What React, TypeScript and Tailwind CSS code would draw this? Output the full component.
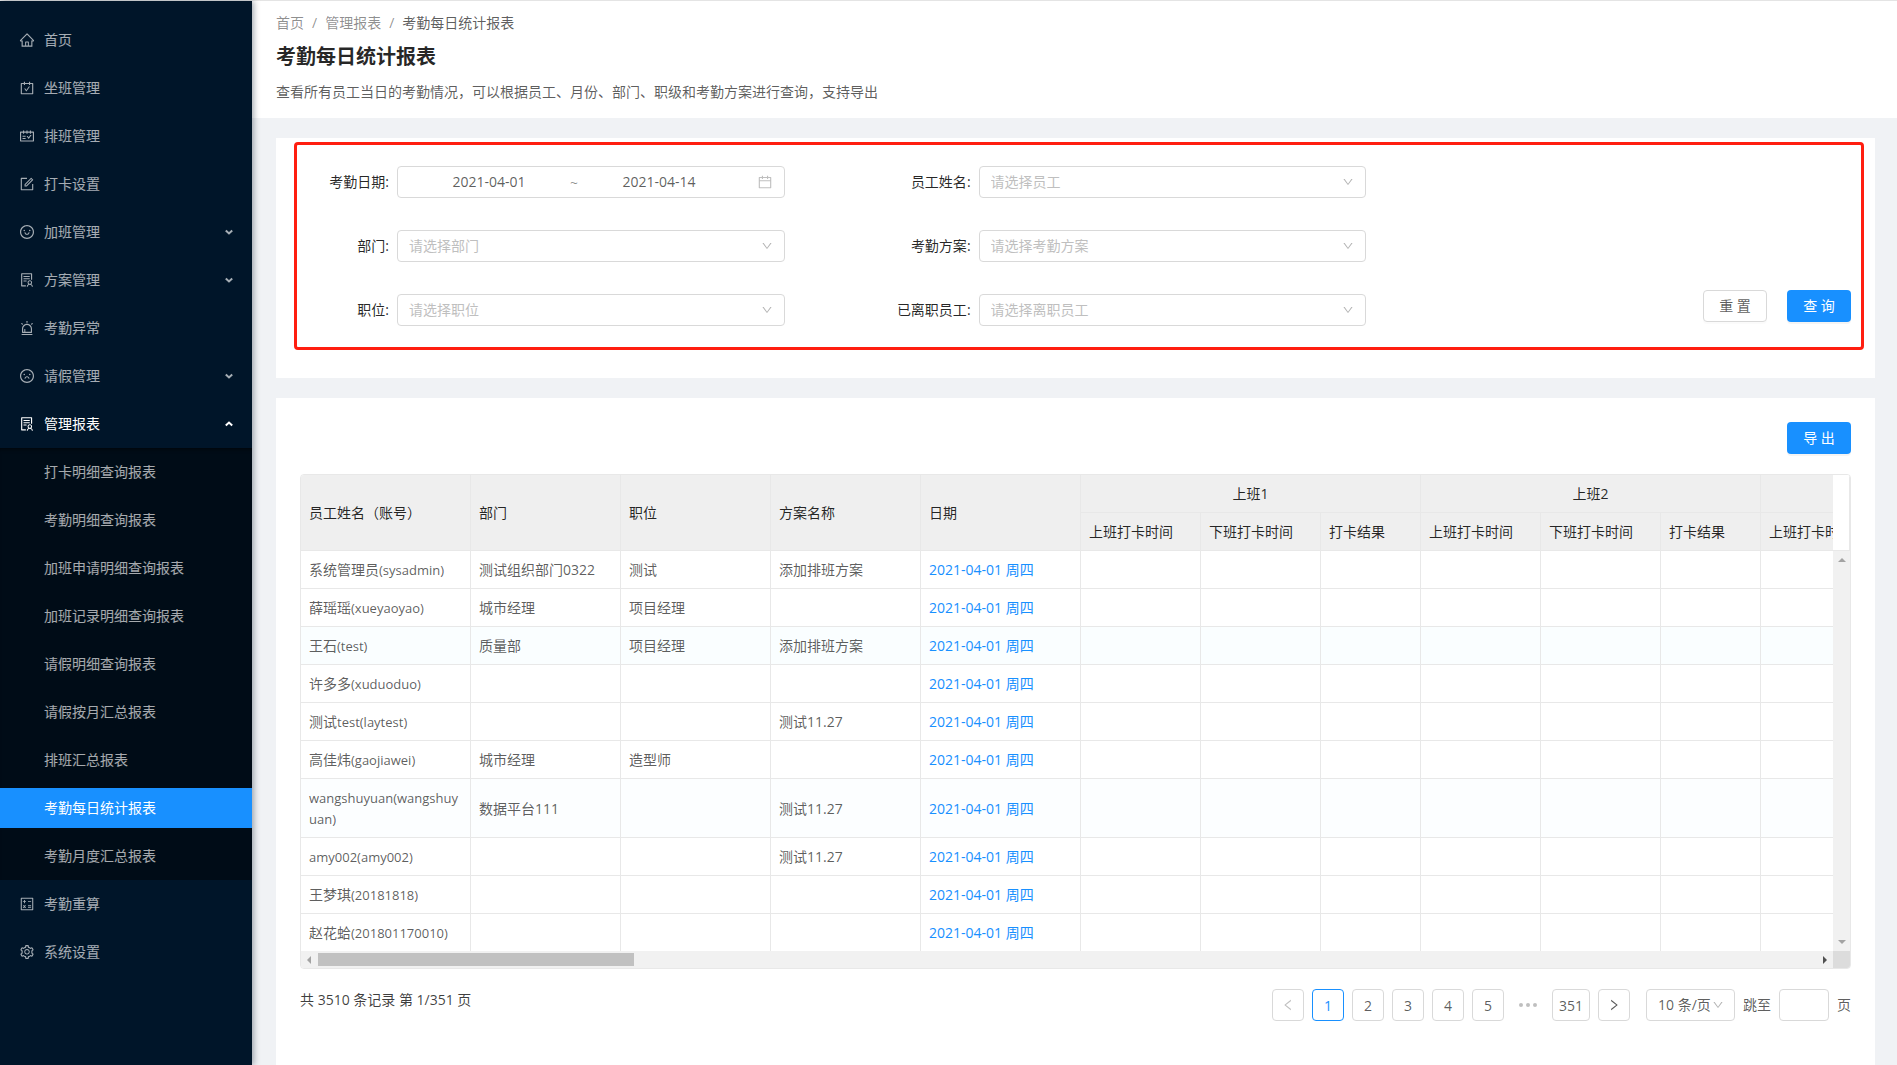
import React, { useState } from "react";
import type { IconType } from "react-icons";
import {
  AiOutlineAlert,
  AiOutlineCalculator,
  AiOutlineCalendar,
  AiOutlineCarryOut,
  AiOutlineDown,
  AiOutlineForm,
  AiOutlineFrown,
  AiOutlineHome,
  AiOutlineLeft,
  AiOutlineRight,
  AiOutlineSchedule,
  AiOutlineSetting,
  AiOutlineSmile,
  AiOutlineSolution,
} from "react-icons/ai";

type MenuEntry = { label: string; icon: IconType; children?: string[]; group?: boolean; open?: boolean };

const menu: MenuEntry[] = [
  { label: "首页", icon: AiOutlineHome },
  { label: "坐班管理", icon: AiOutlineCarryOut },
  { label: "排班管理", icon: AiOutlineSchedule },
  { label: "打卡设置", icon: AiOutlineForm },
  { label: "加班管理", icon: AiOutlineSmile, group: true },
  { label: "方案管理", icon: AiOutlineSolution, group: true },
  { label: "考勤异常", icon: AiOutlineAlert },
  { label: "请假管理", icon: AiOutlineFrown, group: true },
  {
    label: "管理报表",
    icon: AiOutlineSolution,
    group: true,
    open: true,
    children: [
      "打卡明细查询报表",
      "考勤明细查询报表",
      "加班申请明细查询报表",
      "加班记录明细查询报表",
      "请假明细查询报表",
      "请假按月汇总报表",
      "排班汇总报表",
      "考勤每日统计报表",
      "考勤月度汇总报表",
    ],
  },
  { label: "考勤重算", icon: AiOutlineCalculator },
  { label: "系统设置", icon: AiOutlineSetting },
];

const current = "考勤每日统计报表";

function Caret({ up }: { up?: boolean }) {
  return (
    <svg width="8" height="6" viewBox="0 0 8 6" fill="none" stroke="currentColor" strokeWidth="2" aria-hidden="true">
      <path d={up ? "M0.8 4.6 L4 1.6 L7.2 4.6" : "M0.8 1.4 L4 4.4 L7.2 1.4"} />
    </svg>
  );
}

function Sidebar() {
  return (
    <nav className="relative z-10 w-[252px] shrink-0 bg-[#001529] pt-[15px] text-white/65 shadow-[2px_0_6px_rgba(0,21,41,0.35)]">
      <ul>
        {menu.map((m) => {
          const Icon = m.icon;
          const row = (
            <>
              <Icon className="size-4 shrink-0" />
              <span className="flex-1 pb-0.5 text-left">{m.label}</span>
              {m.group && <Caret up={m.open} />}
            </>
          );
          const rowClass = m.open
            ? "my-1 flex h-10 w-full items-center gap-[9px] pr-[19px] pl-[19px] text-white"
            : "my-1 flex h-10 w-full items-center gap-[9px] pr-[19px] pl-[19px]";
          return (
            <li key={m.label} className="flow-root">
              {m.group ? (
                <button type="button" aria-expanded={!!m.open} className={rowClass}>
                  {row}
                </button>
              ) : (
                <a href="#" className={rowClass}>
                  {row}
                </a>
              )}
              {m.children && (
                <ul className="flow-root bg-[#000c17] shadow-[inset_0_4px_4px_-3px_rgba(0,0,0,0.6)]">
                  {m.children.map((c) => (
                    <li key={c} className="flow-root">
                      <a
                        href="#"
                        className={
                          c === current
                            ? "my-1 flex h-10 items-center bg-[#1890ff] pb-0.5 pl-11 text-white"
                            : "my-1 flex h-10 items-center pb-0.5 pl-11"
                        }
                      >
                        {c}
                      </a>
                    </li>
                  ))}
                </ul>
              )}
            </li>
          );
        })}
      </ul>
    </nav>
  );
}

function Field({ id, label, children }: { id: string; label: string; children: React.ReactNode }) {
  return (
    <div className="grid grid-cols-[1fr_4fr_1fr] items-center">
      <label htmlFor={id} className="justify-self-end pr-2 pb-0.5 whitespace-nowrap text-black/85">
        {label}:
      </label>
      {children}
    </div>
  );
}

function SelectField({ id, label, placeholder }: { id: string; label: string; placeholder: string }) {
  return (
    <Field id={id} label={label}>
      <div className="relative">
        <select
          id={id}
          defaultValue=""
          className="h-8 w-full appearance-none rounded border border-[#d9d9d9] bg-white px-[11px] pb-0.5 text-[#bfbfbf] outline-none"
        >
          <option value="">{placeholder}</option>
        </select>
        <AiOutlineDown className="pointer-events-none absolute top-2.5 right-3 size-3 text-black/30" />
      </div>
    </Field>
  );
}

function SearchPanel() {
  return (
    <section className="relative bg-white px-6 pt-7 pb-[52px]">
      <form className="flex items-end" onSubmit={(e) => e.preventDefault()}>
        <div className="grid w-3/4 grid-cols-2 gap-y-8">
          <Field id="date-from" label="考勤日期">
            <div className="flex h-8 items-center rounded border border-[#d9d9d9] px-[11px] text-black/65">
              <input id="date-from" defaultValue="2021-04-01" className="w-[44%] bg-transparent pb-0.5 text-center outline-none" />
              <span className="w-2.5 text-center text-black/45">~</span>
              <input
                aria-label="结束日期"
                defaultValue="2021-04-14"
                className="w-[44%] bg-transparent pb-0.5 text-center outline-none"
              />
              <AiOutlineCalendar className="ml-auto size-4 shrink-0 text-black/25" />
            </div>
          </Field>
          <SelectField id="employee" label="员工姓名" placeholder="请选择员工" />
          <SelectField id="dept" label="部门" placeholder="请选择部门" />
          <SelectField id="plan" label="考勤方案" placeholder="请选择考勤方案" />
          <SelectField id="position" label="职位" placeholder="请选择职位" />
          <SelectField id="left-employee" label="已离职员工" placeholder="请选择离职员工" />
        </div>
        <div className="mb-1 flex flex-1 justify-end gap-5">
          <button
            type="reset"
            className="h-8 w-16 rounded border border-[#d9d9d9] bg-white pb-0.5 text-black/65 shadow-[0_2px_0_rgba(0,0,0,0.015)]"
          >
            重 置
          </button>
          <button type="submit" className="h-8 w-16 rounded bg-[#1890ff] pb-0.5 text-white shadow-[0_2px_0_rgba(0,0,0,0.045)]">
            查 询
          </button>
        </div>
      </form>
      <div className="pointer-events-none absolute top-1 right-[11px] bottom-7 left-[18px] rounded-sm border-[3px] border-[#ff1e10]" />
    </section>
  );
}

type Row = { name: string; account: string; dept?: string; job?: string; plan?: string; tint?: string };

const rows: Row[] = [
  { name: "系统管理员", account: "(sysadmin)", dept: "测试组织部门0322", job: "测试", plan: "添加排班方案" },
  { name: "薛瑶瑶", account: "(xueyaoyao)", dept: "城市经理", job: "项目经理" },
  { name: "王石", account: "(test)", dept: "质量部", job: "项目经理", plan: "添加排班方案", tint: "bg-[#fafeff]" },
  { name: "许多多", account: "(xuduoduo)" },
  { name: "测试", account: "test(laytest)", plan: "测试11.27" },
  { name: "高佳炜", account: "(gaojiawei)", dept: "城市经理", job: "造型师" },
  { name: "", account: "wangshuyuan(wangshuyuan)", dept: "数据平台111", plan: "测试11.27", tint: "bg-[#fcfeff]" },
  { name: "", account: "amy002(amy002)", plan: "测试11.27" },
  { name: "王梦琪", account: "(20181818)" },
  { name: "赵花蛤", account: "(201801170010)" },
];

const cell = "border-r border-b border-[#e8e8e8] px-2 py-2 text-left font-normal break-all";
const shifts = ["上班1", "上班2", "上班3"];
const shiftCells = [0, 1, 2, 3, 4, 5, 6, 7, 8];

function ReportTable() {
  return (
    <div className="grid h-[495px] grid-cols-[1fr_17px] grid-rows-[476px_17px] overflow-hidden rounded border border-[#e8e8e8]">
      <div className="overflow-hidden">
        <table className="w-[1800px] table-fixed border-separate border-spacing-0 text-black/65">
          <colgroup>
            <col className="w-[170px]" />
            <col className="w-[150px]" />
            <col className="w-[150px]" />
            <col className="w-[150px]" />
            <col className="w-[160px]" />
            {shifts.map((s) => (
              <React.Fragment key={s}>
                <col className="w-[120px]" />
                <col className="w-[120px]" />
                <col className="w-[100px]" />
              </React.Fragment>
            ))}
          </colgroup>
          <thead className="bg-[#efefef] text-black/85">
            <tr>
              {["员工姓名（账号）", "部门", "职位", "方案名称", "日期"].map((h) => (
                <th key={h} rowSpan={2} scope="col" className={cell}>
                  {h}
                </th>
              ))}
              {shifts.map((s) => (
                <th
                  key={s}
                  colSpan={3}
                  scope="colgroup"
                  className="border-r border-b border-[#e8e8e8] p-2 text-center font-normal"
                >
                  {s}
                </th>
              ))}
            </tr>
            <tr>
              {shifts.map((s) => (
                <React.Fragment key={s}>
                  <th scope="col" className={cell}>上班打卡时间</th>
                  <th scope="col" className={cell}>下班打卡时间</th>
                  <th scope="col" className={cell}>打卡结果</th>
                </React.Fragment>
              ))}
            </tr>
          </thead>
          <tbody>
            {rows.map((r) => (
              <tr key={r.account} className={r.tint}>
                <td className={cell}>
                  {r.name}
                  <span className="text-[13px] leading-none">{r.account}</span>
                </td>
                <td className={cell}>{r.dept}</td>
                <td className={cell}>{r.job}</td>
                <td className={cell}>{r.plan}</td>
                <td className={cell}>
                  <a href="#" className="text-[#1890ff]">
                    2021-04-01 周四
                  </a>
                </td>
                {shiftCells.map((i) => (
                  <td key={i} className={cell} />
                ))}
              </tr>
            ))}
          </tbody>
        </table>
      </div>
      <div className="flex flex-col">
        <div className="h-[76px] border-r border-b border-[#e8e8e8] bg-white" />
        <div className="flex flex-1 flex-col items-center justify-between bg-[#f1f1f1] py-[7px] text-[#a3a3a3]">
          <svg width="8" height="4" viewBox="0 0 8 4" fill="currentColor" aria-hidden="true">
            <path d="M0 4 L4 0 L8 4 Z" />
          </svg>
          <svg width="8" height="4" viewBox="0 0 8 4" fill="currentColor" aria-hidden="true">
            <path d="M0 0 L8 0 L4 4 Z" />
          </svg>
        </div>
      </div>
      <div className="flex items-center justify-between bg-[#f1f1f1] px-1.5">
        <div className="flex items-center gap-[7px]">
          <svg width="4" height="8" viewBox="0 0 4 8" fill="#a3a3a3" aria-hidden="true">
            <path d="M4 0 L4 8 L0 4 Z" />
          </svg>
          <div className="h-[13px] w-[316px] bg-[#c1c1c1]" />
        </div>
        <svg width="4" height="8" viewBox="0 0 4 8" fill="#505050" aria-hidden="true">
          <path d="M0 0 L4 4 L0 8 Z" />
        </svg>
      </div>
      <div className="bg-[#dcdcdc]" />
    </div>
  );
}

function Pagination() {
  const [page, setPage] = useState(1);
  const base = "flex h-8 min-w-8 items-center justify-center rounded border bg-white px-1.5";
  return (
    <div className="flex items-start justify-between pt-5">
      <p className="text-black/75">共 3510 条记录 第 1/351 页</p>
      <div className="flex items-center gap-2 text-black/65">
        <button type="button" aria-label="上一页" disabled className={`${base} border-[#d9d9d9] text-black/25`}>
          <AiOutlineLeft className="size-3.5" />
        </button>
        {[1, 2, 3, 4, 5].map((n) => (
          <button
            key={n}
            type="button"
            onClick={() => setPage(n)}
            className={n === page ? `${base} border-[#1890ff] text-[#1890ff]` : `${base} border-[#d9d9d9]`}
          >
            {n}
          </button>
        ))}
        <span className="flex w-8 justify-center text-black/25">
          <svg width="18" height="4" viewBox="0 0 18 4" fill="currentColor" aria-hidden="true">
            <circle cx="2" cy="2" r="2" />
            <circle cx="9" cy="2" r="2" />
            <circle cx="16" cy="2" r="2" />
          </svg>
        </span>
        <button type="button" onClick={() => setPage(351)} className={`${base} border-[#d9d9d9]`}>
          351
        </button>
        <button type="button" aria-label="下一页" className={`${base} border-[#d9d9d9]`}>
          <AiOutlineRight className="size-3.5" />
        </button>
        <div className="relative ml-2">
          <select
            aria-label="每页条数"
            className="h-8 w-[89px] appearance-none rounded border border-[#d9d9d9] bg-white pb-0.5 pl-[11px] outline-none"
          >
            <option>10 条/页</option>
          </select>
          <AiOutlineDown className="pointer-events-none absolute top-2.5 right-[11px] size-3 text-black/30" />
        </div>
        <label htmlFor="jump" className="pb-0.5">
          跳至
        </label>
        <input id="jump" className="h-8 w-[50px] rounded border border-[#d9d9d9] px-2 outline-none" />
        <span className="pb-0.5">页</span>
      </div>
    </div>
  );
}

export default function App() {
  return (
    <div className="flex min-h-screen border-t border-[#e4e4e4] bg-[#f0f2f5] font-['Open_Sans','Noto_Sans_CJK_SC',sans-serif] text-sm leading-[21px]">
      <Sidebar />
      <div className="flex min-w-0 flex-1 flex-col">
        <header className="bg-white px-6 pt-[11px] pb-4">
          <nav aria-label="breadcrumb" className="flex gap-2 text-black/45">
            <a href="#">首页</a>
            <span>/</span>
            <a href="#">管理报表</a>
            <span>/</span>
            <span className="text-black/65">{current}</span>
          </nav>
          <h1 className="mt-2.5 text-xl leading-7 font-bold text-black/85">{current}</h1>
          <p className="mt-2.5 text-black/65">
            查看所有员工当日的考勤情况，可以根据员工、月份、部门、职级和考勤方案进行查询，支持导出
          </p>
        </header>
        <main className="flex flex-1 flex-col gap-5 pt-5 pr-[22px] pl-6">
          <SearchPanel />
          <section className="flex-1 bg-white p-6">
            <div className="mb-5 flex justify-end">
              <button
                type="button"
                className="h-8 w-16 rounded bg-[#1890ff] pb-0.5 text-white shadow-[0_2px_0_rgba(0,0,0,0.045)]"
              >
                导 出
              </button>
            </div>
            <ReportTable />
            <Pagination />
          </section>
        </main>
      </div>
    </div>
  );
}
